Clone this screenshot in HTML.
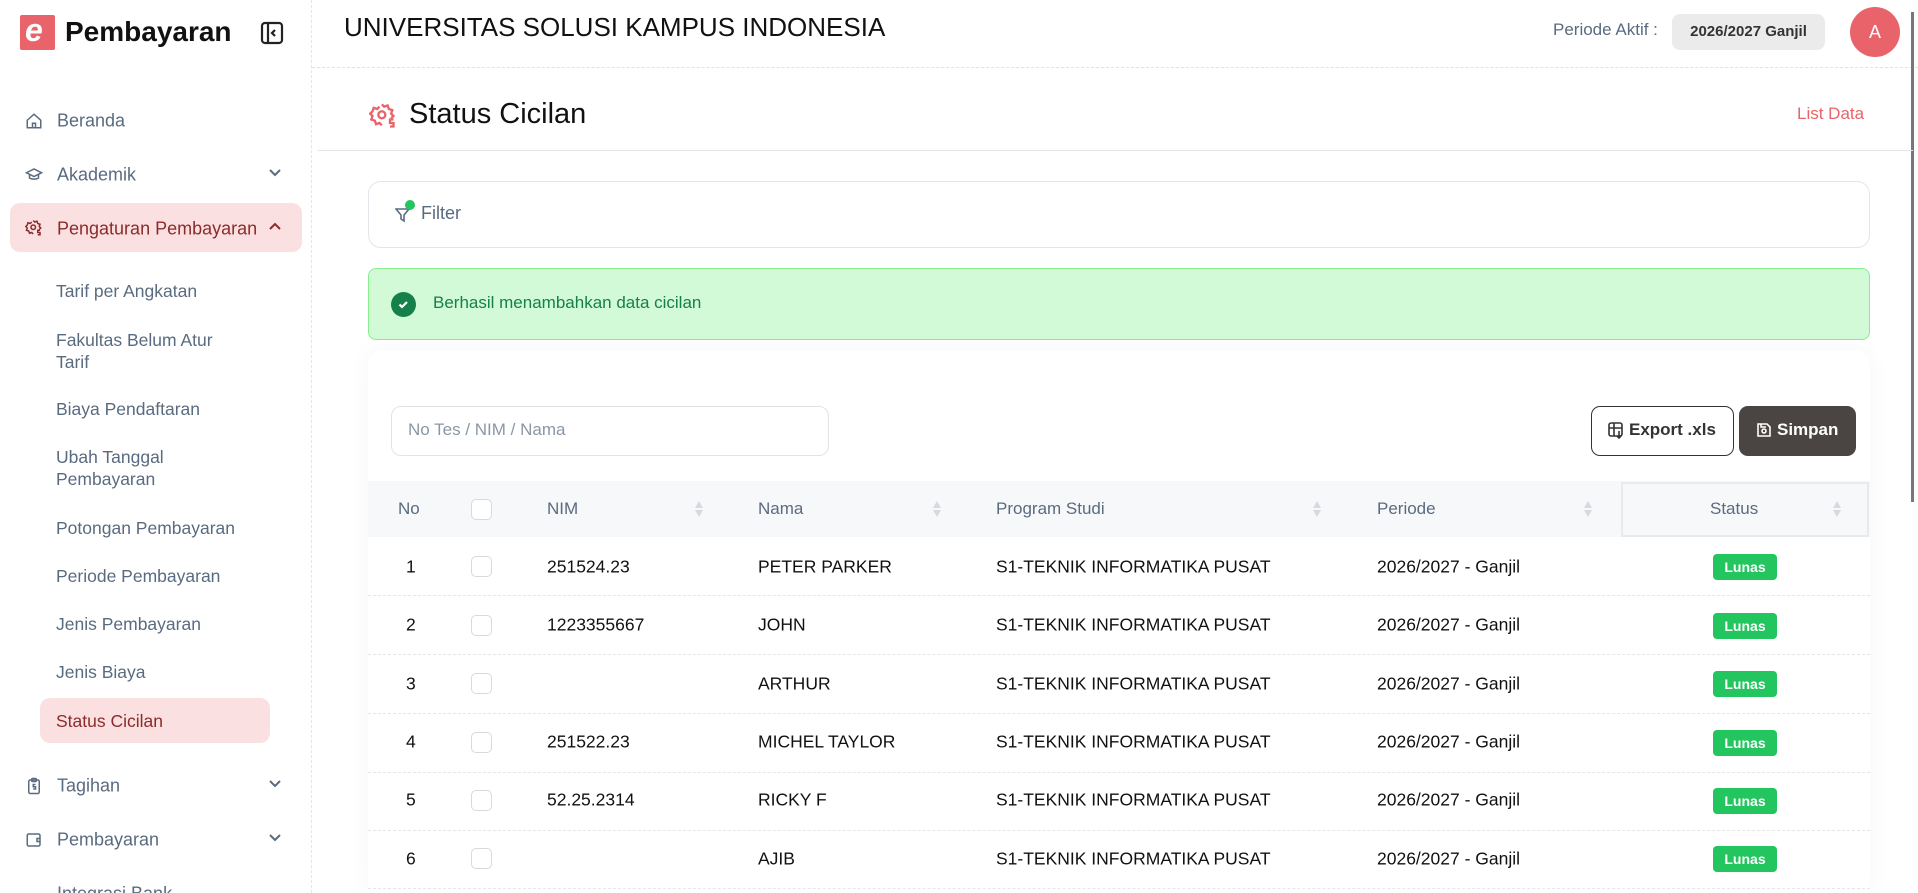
<!DOCTYPE html>
<html><head><meta charset="utf-8"><style>
*{box-sizing:border-box;margin:0;padding:0}
html{width:1918px;height:893px;overflow:hidden}
body{width:1918px;height:893px;overflow:hidden;background:#fff;font-family:"Liberation Sans",sans-serif;position:relative;color:#1f2937}
.a{position:absolute;white-space:nowrap}
.side{left:0;top:0;width:312px;height:893px;border-right:1px dashed #e2e5ea}
.nav{font-size:18px;color:#5a6b80;left:57px;transform:translateY(-50%)}
.ico{left:25px;transform:translateY(-50%);width:18px;height:18px}
.chev{left:268px;transform:translateY(-50%)}
.sub{font-size:17.5px;color:#5a6b80;left:56px;transform:translateY(-50%);line-height:22px}
.row{left:368px;width:1502px;height:59px;border-bottom:1px dashed #e3e6ea}
.td{font-size:17.5px;color:#111;transform:translateY(-50%)}
.cb{width:21px;height:21px;border:1px solid #d6dae0;border-radius:5px;background:#fff}
.lunas{background:#22c55e;color:#fff;font-weight:bold;font-size:14px;width:64px;height:26px;border-radius:4px;text-align:center;line-height:26px}
.th{font-size:17px;color:#5a6b80;transform:translateY(-50%)}
.sort{width:10px;height:20px;transform:translateY(-50%)}
</style></head><body>
<!-- sidebar -->
<div class="a side"></div>
<div class="a" style="left:20px;top:15px;width:35px;height:35px;background:#e9636a;border-radius:2px"></div>
<div class="a" style="left:25px;top:12px;font-size:32px;font-weight:bold;color:#fff;font-style:italic">e</div>
<div class="a" style="left:65px;top:16px;font-size:28px;font-weight:bold;color:#111">Pembayaran</div>
<svg class="a" style="left:260px;top:21px" width="24" height="24" viewBox="0 0 24 24" fill="none" stroke="#222" stroke-width="2.2"><rect x="2" y="2" width="20" height="20" rx="3"/><line x1="8" y1="2" x2="8" y2="22"/><path d="M15 9l-3 3 3 3"/></svg>

<svg class="a ico" style="top:121px" viewBox="0 0 24 24" fill="none" stroke="#5a6b80" stroke-width="2"><path d="M3 11l9-8 9 8v10H3z"/><path d="M10 21v-6h4v6"/></svg>
<div class="a nav" style="top:121px">Beranda</div>
<svg class="a ico" style="top:175px" viewBox="0 0 24 24" fill="none" stroke="#5a6b80" stroke-width="2"><path d="M2 9l10-5 10 5-10 5z"/><path d="M6 11v5c3 2 9 2 12 0v-5"/></svg>
<div class="a nav" style="top:175px">Akademik</div>
<svg class="a chev" style="top:173px" width="14" height="10" viewBox="0 0 14 10" fill="none" stroke="#5a6b80" stroke-width="2"><path d="M2 2l5 5 5-5"/></svg>

<div class="a" style="left:10px;top:203px;width:292px;height:49px;background:#fbe0e1;border-radius:10px"></div>
<svg class="a ico" style="top:228px" viewBox="0 0 24 24" fill="none" stroke="#8c2b2b" stroke-width="2"><circle cx="11" cy="11" r="3"/><path d="M11 2l2 2 3-1 1 3 3 1-1 3 2 2-2 2"/><path d="M11 20l-2-2-3 1-1-3-3-1 1-3-2-2 2-2 1-3 3 1 2-2"/><path d="M20 15h-3v3h3v3h-3"/></svg>
<div class="a nav" style="top:229px;color:#8c2b2b">Pengaturan Pembayaran</div>
<svg class="a chev" style="top:226px" width="14" height="10" viewBox="0 0 14 10" fill="none" stroke="#8c2b2b" stroke-width="2"><path d="M2 8l5-5 5 5"/></svg>

<div class="a sub" style="top:291px">Tarif per Angkatan</div>
<div class="a sub" style="top:351px">Fakultas Belum Atur<br>Tarif</div>
<div class="a sub" style="top:409px">Biaya Pendaftaran</div>
<div class="a sub" style="top:468px">Ubah Tanggal<br>Pembayaran</div>
<div class="a sub" style="top:528px">Potongan Pembayaran</div>
<div class="a sub" style="top:576px">Periode Pembayaran</div>
<div class="a sub" style="top:624px">Jenis Pembayaran</div>
<div class="a sub" style="top:672px">Jenis Biaya</div>
<div class="a" style="left:40px;top:698px;width:230px;height:45px;background:#fbe0e1;border-radius:10px"></div>
<div class="a sub" style="top:721px;color:#8c2b2b">Status Cicilan</div>

<svg class="a ico" style="top:786px" viewBox="0 0 24 24" fill="none" stroke="#5a6b80" stroke-width="2"><rect x="5" y="4" width="14" height="18" rx="2"/><rect x="9" y="2" width="6" height="4" rx="1"/><path d="M14 10h-3v3h3v3h-3"/></svg>
<div class="a nav" style="top:786px">Tagihan</div>
<svg class="a chev" style="top:784px" width="14" height="10" viewBox="0 0 14 10" fill="none" stroke="#5a6b80" stroke-width="2"><path d="M2 2l5 5 5-5"/></svg>
<svg class="a ico" style="top:840px" viewBox="0 0 24 24" fill="none" stroke="#5a6b80" stroke-width="2"><rect x="3" y="4" width="17" height="16" rx="2"/><path d="M20 10h-4v4h4"/></svg>
<div class="a nav" style="top:840px">Pembayaran</div>
<svg class="a chev" style="top:838px" width="14" height="10" viewBox="0 0 14 10" fill="none" stroke="#5a6b80" stroke-width="2"><path d="M2 2l5 5 5-5"/></svg>
<div class="a nav" style="top:894px">Integrasi Bank</div>

<!-- header -->
<div class="a" style="left:312px;top:67px;width:1606px;border-top:1px dashed #dfe2e6"></div>
<div class="a" style="left:344px;top:12px;font-size:26px;color:#111">UNIVERSITAS SOLUSI KAMPUS INDONESIA</div>
<div class="a" style="left:1553px;top:20px;font-size:17px;color:#5a6b80">Periode Aktif :</div>
<div class="a" style="left:1672px;top:14px;width:153px;height:36px;background:#ebebeb;border-radius:8px;font-size:15px;font-weight:bold;color:#333;text-align:center;line-height:36px">2026/2027 Ganjil</div>
<div class="a" style="left:1850px;top:7px;width:50px;height:50px;border-radius:50%;background:#e9636a;color:#fff;font-size:18px;text-align:center;line-height:50px">A</div>
<div class="a" style="left:1911px;top:12px;width:3px;height:490px;background:#777"></div>

<!-- title -->
<svg class="a" style="left:369px;top:102px" width="28" height="28" viewBox="0 0 24 24" fill="none" stroke="#e9636a" stroke-width="2"><circle cx="11" cy="11" r="3"/><path d="M11 2l2 2 3-1 1 3 3 1-1 3 2 2-2 2"/><path d="M11 20l-2-2-3 1-1-3-3-1 1-3-2-2 2-2 1-3 3 1 2-2"/><path d="M21 15h-3v3h3v3h-3"/></svg>
<div class="a" style="left:409px;top:98px;font-size:29px;color:#111">Status Cicilan</div>
<div class="a" style="left:1797px;top:104px;font-size:17px;color:#e9636a">List Data</div>
<div class="a" style="left:318px;top:150px;width:1595px;border-top:1px solid #e3e5ea"></div>

<!-- filter -->
<div class="a" style="left:368px;top:181px;width:1502px;height:67px;border:1px solid #e3e5ea;border-radius:13px"></div>
<svg class="a" style="left:395px;top:207px" width="16" height="16" viewBox="0 0 16 16" fill="none" stroke="#5a6b80" stroke-width="1.6"><path d="M1 2h13l-5 6v6l-3-2V8z"/></svg>
<div class="a" style="left:405px;top:200px;width:10px;height:10px;border-radius:50%;background:#22c55e"></div>
<div class="a" style="left:421px;top:203px;font-size:18px;color:#5a6b80">Filter</div>

<!-- alert -->
<div class="a" style="left:368px;top:268px;width:1502px;height:72px;background:#d3fad6;border:1px solid #86ef8c;border-radius:8px"></div>
<div class="a" style="left:391px;top:292px;width:25px;height:25px;border-radius:50%;background:#16804a"></div>
<svg class="a" style="left:397px;top:298px" width="13" height="13" viewBox="0 0 13 13" fill="none" stroke="#fff" stroke-width="2.2"><path d="M2.5 6.5l2.5 2.5 5-5"/></svg>
<div class="a" style="left:433px;top:293px;font-size:17px;color:#16804a">Berhasil menambahkan data cicilan</div>

<!-- table card -->
<div class="a" style="left:368px;top:350px;width:1502px;height:543px;box-shadow:0 0 24px rgba(0,0,0,0.04);border-radius:14px 14px 0 0"></div>
<div class="a" style="left:391px;top:406px;width:438px;height:50px;border:1px solid #e0e3e8;border-radius:10px"></div>
<div class="a" style="left:408px;top:420px;font-size:17px;color:#8a97a6">No Tes / NIM / Nama</div>
<div class="a" style="left:1591px;top:406px;width:143px;height:50px;border:1px solid #333;border-radius:9px"></div>
<svg class="a" style="left:1608px;top:422px" width="16" height="17" viewBox="0 0 16 17" fill="none" stroke="#333" stroke-width="1.6"><rect x="1" y="1" width="13" height="13" rx="2"/><path d="M1 6h13M6 1v13"/><path d="M11 9v7M9 14l2 2 2-2"/></svg>
<div class="a" style="left:1629px;top:420px;font-size:17px;font-weight:bold;color:#333">Export .xls</div>
<div class="a" style="left:1739px;top:406px;width:117px;height:50px;background:#4a4543;border-radius:9px"></div>
<svg class="a" style="left:1757px;top:423px" width="14" height="14" viewBox="0 0 14 14" fill="none" stroke="#fff" stroke-width="1.6"><path d="M1 1h9l3 3v9H1z"/><circle cx="7" cy="8" r="2"/><path d="M4 1v3h5"/></svg>
<div class="a" style="left:1777px;top:420px;font-size:17px;font-weight:bold;color:#fff">Simpan</div>

<div class="a" style="left:368px;top:481px;width:1502px;height:56px;background:#f7f8fa"></div>
<div class="a" style="left:1621px;top:482px;width:248px;height:55px;border:2px solid #e8eaee"></div>
<div class="a th" style="left:398px;top:509px">No</div>
<div class="a cb" style="left:471px;top:499px"></div>
<div class="a th" style="left:547px;top:509px">NIM</div>
<div class="a th" style="left:758px;top:509px">Nama</div>
<div class="a th" style="left:996px;top:509px">Program Studi</div>
<div class="a th" style="left:1377px;top:509px">Periode</div>
<div class="a th" style="left:1710px;top:509px">Status</div>
<svg class="a sort" style="left:694px;top:509px" viewBox="0 0 10 20" fill="#d5dae0"><path d="M5 2l4 7H1zM5 18l4-7H1z"/></svg>
<svg class="a sort" style="left:932px;top:509px" viewBox="0 0 10 20" fill="#d5dae0"><path d="M5 2l4 7H1zM5 18l4-7H1z"/></svg>
<svg class="a sort" style="left:1312px;top:509px" viewBox="0 0 10 20" fill="#d5dae0"><path d="M5 2l4 7H1zM5 18l4-7H1z"/></svg>
<svg class="a sort" style="left:1583px;top:509px" viewBox="0 0 10 20" fill="#d5dae0"><path d="M5 2l4 7H1zM5 18l4-7H1z"/></svg>
<svg class="a sort" style="left:1832px;top:509px" viewBox="0 0 10 20" fill="#d5dae0"><path d="M5 2l4 7H1zM5 18l4-7H1z"/></svg>

<!-- rows -->
<div class="a row" style="top:537px"></div>
<div class="a row" style="top:596px"></div>
<div class="a row" style="top:655px"></div>
<div class="a row" style="top:714px"></div>
<div class="a row" style="top:772px"></div>
<div class="a row" style="top:830px"></div>

<div class="a td" style="left:406px;top:567px">1</div><div class="a cb" style="left:471px;top:556px"></div><div class="a td" style="left:547px;top:567px">251524.23</div><div class="a td" style="left:758px;top:567px">PETER PARKER</div><div class="a td" style="left:996px;top:567px">S1-TEKNIK INFORMATIKA PUSAT</div><div class="a td" style="left:1377px;top:567px">2026/2027 - Ganjil</div><div class="a lunas" style="left:1713px;top:554px">Lunas</div>
<div class="a td" style="left:406px;top:625px">2</div><div class="a cb" style="left:471px;top:615px"></div><div class="a td" style="left:547px;top:625px">1223355667</div><div class="a td" style="left:758px;top:625px">JOHN</div><div class="a td" style="left:996px;top:625px">S1-TEKNIK INFORMATIKA PUSAT</div><div class="a td" style="left:1377px;top:625px">2026/2027 - Ganjil</div><div class="a lunas" style="left:1713px;top:613px">Lunas</div>
<div class="a td" style="left:406px;top:684px">3</div><div class="a cb" style="left:471px;top:673px"></div><div class="a td" style="left:758px;top:684px">ARTHUR</div><div class="a td" style="left:996px;top:684px">S1-TEKNIK INFORMATIKA PUSAT</div><div class="a td" style="left:1377px;top:684px">2026/2027 - Ganjil</div><div class="a lunas" style="left:1713px;top:671px">Lunas</div>
<div class="a td" style="left:406px;top:742px">4</div><div class="a cb" style="left:471px;top:732px"></div><div class="a td" style="left:547px;top:742px">251522.23</div><div class="a td" style="left:758px;top:742px">MICHEL TAYLOR</div><div class="a td" style="left:996px;top:742px">S1-TEKNIK INFORMATIKA PUSAT</div><div class="a td" style="left:1377px;top:742px">2026/2027 - Ganjil</div><div class="a lunas" style="left:1713px;top:730px">Lunas</div>
<div class="a td" style="left:406px;top:800px">5</div><div class="a cb" style="left:471px;top:790px"></div><div class="a td" style="left:547px;top:800px">52.25.2314</div><div class="a td" style="left:758px;top:800px">RICKY F</div><div class="a td" style="left:996px;top:800px">S1-TEKNIK INFORMATIKA PUSAT</div><div class="a td" style="left:1377px;top:800px">2026/2027 - Ganjil</div><div class="a lunas" style="left:1713px;top:788px">Lunas</div>
<div class="a td" style="left:406px;top:859px">6</div><div class="a cb" style="left:471px;top:848px"></div><div class="a td" style="left:758px;top:859px">AJIB</div><div class="a td" style="left:996px;top:859px">S1-TEKNIK INFORMATIKA PUSAT</div><div class="a td" style="left:1377px;top:859px">2026/2027 - Ganjil</div><div class="a lunas" style="left:1713px;top:846px">Lunas</div>
</body></html>
